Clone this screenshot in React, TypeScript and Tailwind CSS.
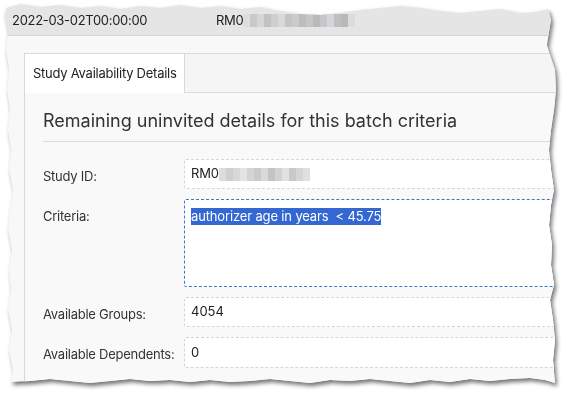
const headerBlur = ['#dedede', '#c9c9c9', '#d6d6d6', '#c2c2c2', '#cfcfcf', '#d9d9d9', '#c4c4c4', '#cbcbcb', '#bdbdbd', '#c6c6c6', '#b9b9b9', '#c7c7c7', '#d3d7db', '#bfbfbf', '#b8b8b8', '#dcdcdc']
const idBlur = ['#dcdcdc', '#cfcfcf', '#d8d8d8', '#e3e3e3', '#d4d4d4', '#cacaca', '#d9d9d9', '#c4c4c4', '#d2d2d2', '#e2e2e2', '#c9c9c9', '#d6d6d6', '#e0e0e0']

function Mosaic({ colors }: { colors: string[] }) {
  return (
    <span className="inline-flex h-[13px]">
      {colors.map((c, i) => (
        <span key={i} className="w-[7px] h-full" style={{ backgroundColor: c }} />
      ))}
    </span>
  )
}

function Field({ label, children }: { label: string; children: React.ReactNode }) {
  return (
    <div className="flex">
      <div className="w-[141px] shrink-0 pt-[8px] text-[13px] tracking-[-0.25px] text-[#333]">{label}</div>
      {children}
    </div>
  )
}

export default function App() {
  return (
    <div className="w-[567px] h-[396px] bg-white overflow-hidden font-['Inter','Noto_Sans',sans-serif]">
      <div className="drop-shadow-[2px_3px_2px_rgba(0,0,0,0.55)]">
        <div className="h-[396px] flex flex-col bg-[#f8f8f8] [clip-path:polygon(6px_8px,20px_4px,40px_7px,60px_5px,80px_8px,100px_6px,120px_9px,140px_6px,160px_8px,180px_5px,200px_8px,220px_6px,240px_9px,260px_7px,280px_11px,300px_14px,320px_15px,340px_13px,360px_10px,380px_8px,400px_6px,420px_8px,440px_11px,460px_13px,480px_11px,500px_9px,520px_13px,535px_12px,548px_9px,551px_20px,549px_32px,547px_45px,551px_58px,555px_70px,556px_90px,554px_110px,551px_130px,549px_150px,551px_170px,554px_190px,551px_205px,549px_225px,552px_245px,551px_265px,554px_285px,550px_300px,553px_320px,555px_340px,553px_360px,555px_383px,545px_380px,530px_378px,510px_379px,490px_381px,470px_379px,450px_382px,430px_380px,410px_383px,390px_381px,370px_379px,350px_381px,330px_380px,310px_383px,290px_381px,270px_379px,250px_381px,230px_382px,210px_380px,190px_382px,170px_380px,150px_381px,130px_379px,110px_381px,90px_383px,70px_381px,50px_379px,30px_381px,11px_382px,13px_370px,9px_350px,12px_330px,8px_310px,11px_290px,9px_270px,12px_250px,8px_230px,10px_210px,13px_190px,9px_170px,11px_150px,8px_130px,10px_110px,7px_90px,9px_70px,6px_50px,8px_30px,5px_15px)]">
          {/* top record row */}
          <div className="h-[36px] shrink-0 bg-[#e5e5e5] border-b border-[#d5d5d5] flex items-center pt-[6px] pl-3 text-[13px] tracking-[-0.3px] text-[#222]">
            <span className="w-[204px]">2022-03-02T00:00:00</span>
            <span>RM0</span>
            <Mosaic colors={headerBlur} />
          </div>

          <div className="flex-1 pl-6 pt-[17px]">
            <div className="h-full border-l border-t border-[#d9d9d9] flex flex-col">
              <div className="h-[39px] shrink-0 flex bg-[#f5f5f5] border-b border-[#dcdcdc]">
                <div className="w-[160px] -mb-px bg-white border-r border-[#d9d9d9] flex items-center pl-2 text-[13px] tracking-[-0.25px] text-[#222]">
                  Study Availability Details
                </div>
              </div>

              <div className="flex-1 bg-[#f9f9f9] pl-[18px]">
                <h2 className="h-[49px] flex items-center pt-[7px] text-[18px] text-[#333] border-b border-[#dcdcdc]">
                  Remaining uninvited details for this batch criteria
                </h2>

                <div className="pt-[17px] flex flex-col gap-[10px]">
                  <Field label="Study ID:">
                    <div className="flex-1 h-[30px] bg-white border border-dashed border-[#d6d6d6] rounded-[2px] flex items-center pl-[6px] text-[13px] tracking-[-0.2px] text-[#222]">
                      <span>RM0</span>
                      <Mosaic colors={idBlur} />
                    </div>
                  </Field>
                  <Field label="Criteria:">
                    <div className="flex-1 h-[88px] bg-white border border-dashed border-[#3a7cc4] rounded-[2px] pl-[6px] pt-[7px] text-[13px] tracking-[-0.15px]">
                      <span className="bg-[#3367d1] text-white whitespace-pre leading-[17px] inline-block">authorizer age in years  &lt; 45.75</span>
                    </div>
                  </Field>
                  <Field label="Available Groups:">
                    <div className="flex-1 h-[30px] bg-white border border-dashed border-[#d6d6d6] rounded-[2px] flex items-center pl-[6px] text-[13px] text-[#222]">
                      4054
                    </div>
                  </Field>
                  <Field label="Available Dependents:">
                    <div className="flex-1 h-[31px] bg-white border border-dashed border-[#d6d6d6] rounded-[2px] flex items-center pl-[6px] text-[13px] text-[#222]">
                      0
                    </div>
                  </Field>
                </div>
              </div>
            </div>
          </div>
        </div>
      </div>
    </div>
  )
}
